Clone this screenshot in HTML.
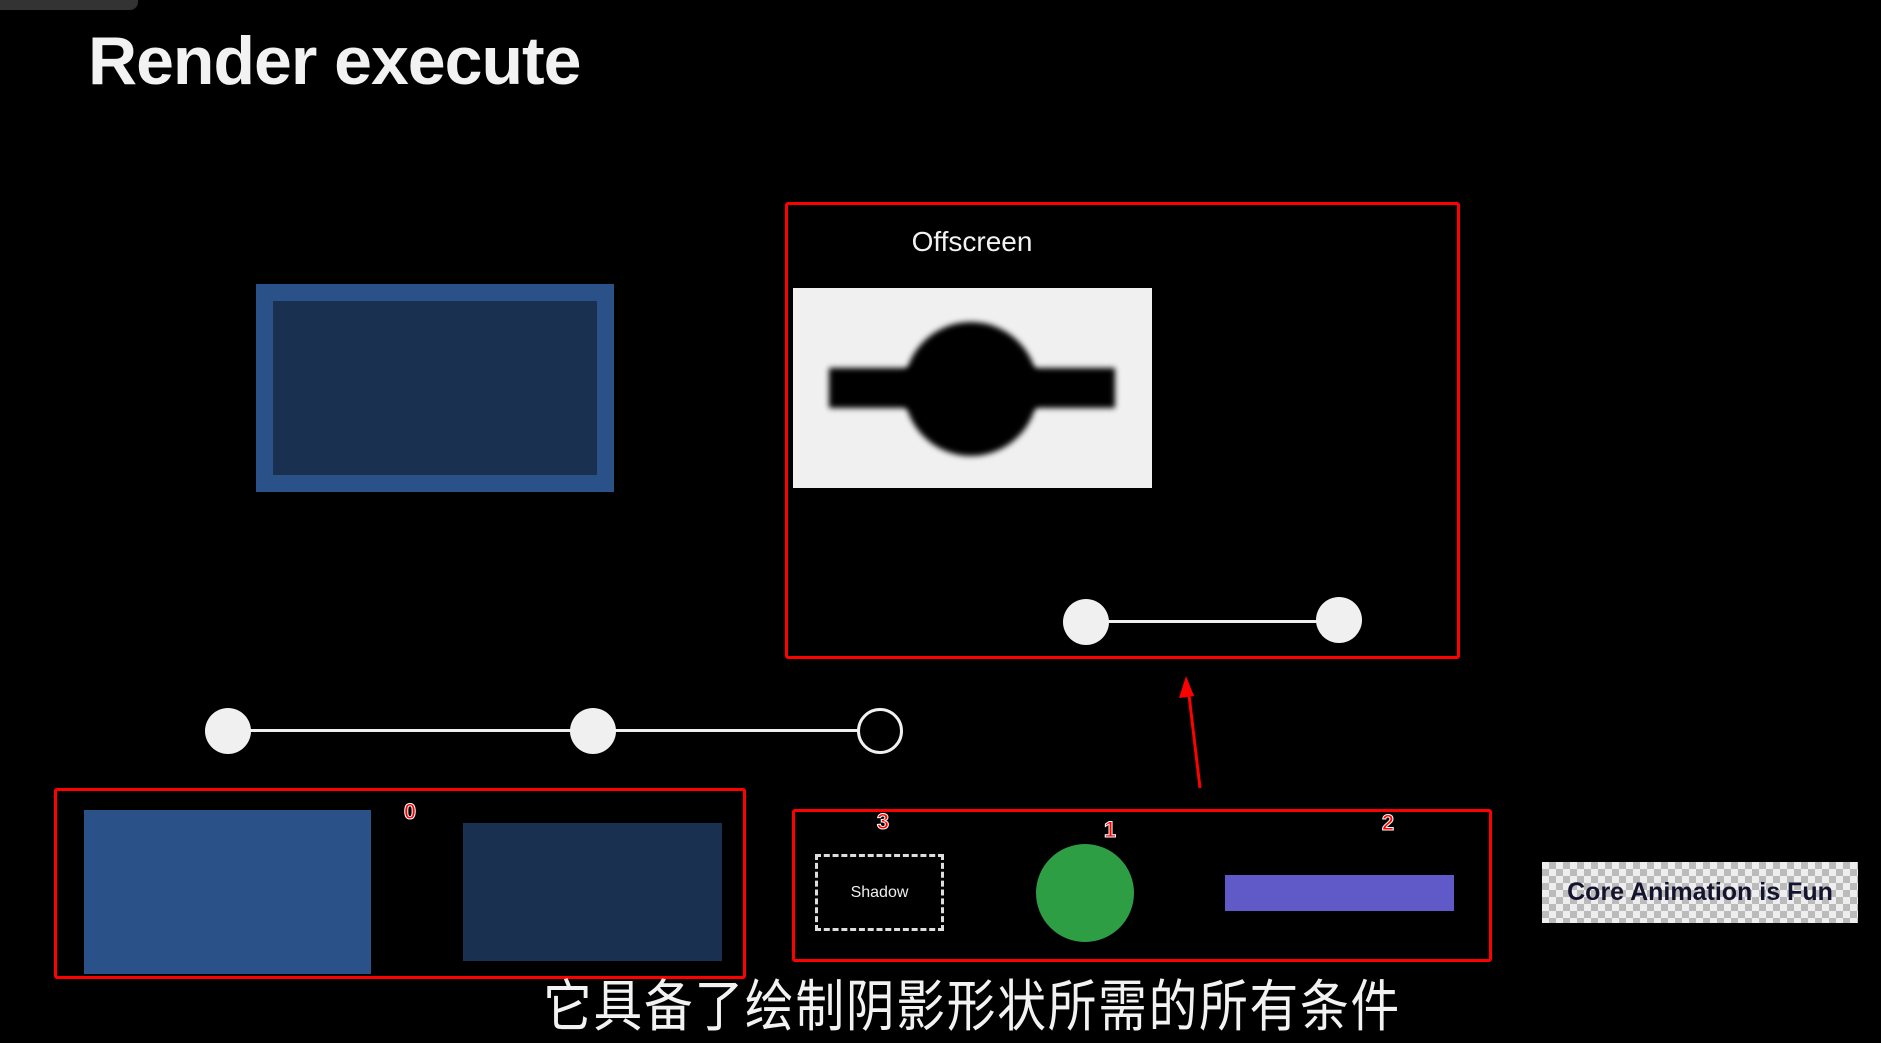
<!DOCTYPE html>
<html><head><meta charset="utf-8"><style>
body{margin:0;width:1881px;height:1030px;background:#000;position:relative;overflow:hidden;font-family:"Liberation Sans",sans-serif}
.a{position:absolute;box-sizing:border-box}
.rb{border:3px solid #f00;border-radius:3px}
.dot{position:absolute;width:46px;height:46px;border-radius:50%;background:#f0f0f0;transform:translate(-50%,-50%)}
.num{position:absolute;color:#f00;font-weight:bold;font-size:22px;-webkit-text-stroke:1px #fff;transform:translate(-50%,-50%)}
</style></head><body>
<div class="a" style="left:0;top:0;width:138px;height:10px;background:#333;border-radius:0 0 8px 0"></div>
<div class="a" style="left:88px;top:22px;color:#f2f2f2;font-size:68px;font-weight:bold;letter-spacing:-1px">Render execute</div>
<div class="a" style="left:256px;top:284px;width:358px;height:208px;background:#1a3050;border:17px solid #2a5289"></div>

<div class="a rb" style="left:785px;top:202px;width:675px;height:457px"></div>
<div class="a" style="left:972px;top:242px;transform:translate(-50%,-50%);color:#f2f2f2;font-size:28px">Offscreen</div>
<div class="a" style="left:793px;top:288px;width:359px;height:200px;background:#f0f0f0;overflow:hidden">
<div class="a" style="left:36px;top:80px;width:286px;height:40px;background:#000;filter:blur(3px)"></div>
<div class="a" style="left:111px;top:34px;width:134px;height:134px;border-radius:50%;background:#000;filter:blur(3px)"></div>
</div>
<div class="a" style="left:1086px;top:620px;width:253px;height:3px;background:#f0f0f0"></div>
<div class="dot" style="left:1086px;top:622px"></div>
<div class="dot" style="left:1339px;top:620px"></div>

<svg class="a" style="left:0;top:0" width="1881" height="1030"><line x1="1200" y1="788" x2="1189" y2="695" stroke="#f00" stroke-width="3"/><polygon points="1186,676 1179,698 1194,696" fill="#f00"/></svg>

<div class="a" style="left:228px;top:729px;width:652px;height:3px;background:#f0f0f0"></div>
<div class="dot" style="left:228px;top:731px"></div>
<div class="dot" style="left:593px;top:731px"></div>
<div class="dot" style="left:880px;top:731px;background:#000;border:3px solid #f0f0f0;box-sizing:border-box"></div>

<div class="a rb" style="left:54px;top:788px;width:692px;height:191px"></div>
<div class="a" style="left:84px;top:810px;width:287px;height:164px;background:#2a5289"></div>
<div class="a" style="left:463px;top:823px;width:259px;height:138px;background:#1a3050"></div>
<div class="num" style="left:410px;top:812px">0</div>

<div class="a rb" style="left:792px;top:809px;width:700px;height:153px"></div>
<div class="num" style="left:883px;top:822px">3</div>
<div class="num" style="left:1110px;top:830px">1</div>
<div class="num" style="left:1388px;top:823px">2</div>
<div class="a" style="left:815px;top:854px;width:129px;height:77px;border:3px dashed #ddd;color:#eee;font-size:16px;display:flex;align-items:center;justify-content:center">Shadow</div>
<div class="a" style="left:1036px;top:844px;width:98px;height:98px;border-radius:50%;background:#2e9e44"></div>
<div class="a" style="left:1225px;top:875px;width:229px;height:36px;background:#6059c8"></div>
<div class="a" style="left:1542px;top:862px;width:316px;height:61px;background-color:#eee;background-image:linear-gradient(45deg,#bbb 25%,transparent 25%,transparent 75%,#bbb 75%),linear-gradient(45deg,#bbb 25%,transparent 25%,transparent 75%,#bbb 75%);background-size:14px 14px;background-position:0 0,7px 7px;color:#14142e;font-weight:bold;font-size:25px;display:flex;align-items:center;justify-content:center">Core Animation is Fun</div>

<div class="a" style="left:0;width:1881px;top:962px;text-align:center;padding-left:62px">
<span style="display:inline-block;color:#f2f2f2;font-size:56px;font-family:'Liberation Sans','Noto Sans CJK SC',sans-serif;letter-spacing:2px;transform:scaleX(0.87);transform-origin:50% 50%">它具备了绘制阴影形状所需的所有条件</span></div>
</body></html>
